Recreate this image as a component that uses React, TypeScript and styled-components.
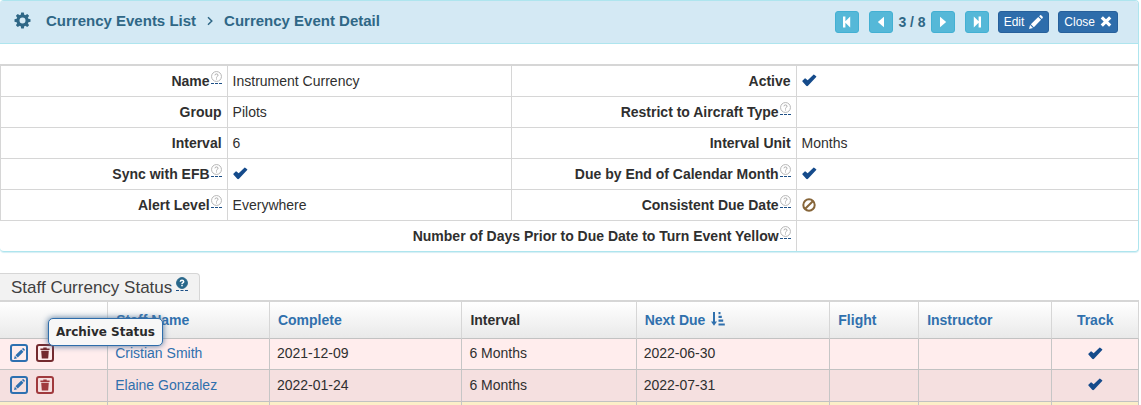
import React from "react";
import styled, { createGlobalStyle, css } from "styled-components";

const GlobalStyle = createGlobalStyle`
  *, *::before, *::after { box-sizing: border-box; }
  body {
    margin: 0;
    background: #fff;
    color: #2f2f2f;
    font: 14px/20px "Liberation Sans", Arial, sans-serif;
  }
`;

const Page = styled.main`
  padding-right: 2px;
`;

const Panel = styled.section`
  border: solid #aee5ee;
  border-width: 1px 1px 1px 0;
  border-radius: 4px;
  box-shadow: 0 1px 1px #d5eef4;
`;

const PanelHeader = styled.header`
  display: flex;
  align-items: center;
  justify-content: space-between;
  min-height: 43px;
  padding: 0 20px 0 14px;
  background: #d4e9f4;
  border-bottom: 1px solid #aee5ee;
  border-radius: 3px 3px 0 0;
`;

const Crumbs = styled.nav`
  display: flex;
  align-items: center;
  gap: 11px;
  color: #2f6786;
  font-size: 15px;
  font-weight: bold;
  padding-bottom: 3px;

  a {
    color: inherit;
    text-decoration: none;
  }
  & > svg:first-child {
    margin-right: 4px;
  }
`;

const Toolbar = styled.div`
  display: flex;
  align-items: center;
  gap: 9px;
`;

const Pager = styled.div`
  display: flex;
  align-items: center;
  gap: 10px;
`;

const Count = styled.span`
  margin: 0 -5px;
  padding-bottom: 1px;
  color: #2f6786;
  font-weight: bold;
`;

const Button = styled.button<{ $primary?: boolean }>`
  display: inline-flex;
  align-items: center;
  justify-content: center;
  gap: 5px;
  min-width: 24px;
  height: 22px;
  padding: 0 5px 1px;
  border: 1px solid ${(p) => (p.$primary ? "#27609b" : "#43b0d3")};
  border-radius: 3px;
  background: ${(p) => (p.$primary ? "#2e6dab" : "#55b8d8")};
  color: #fff;
  font: 12px/18px "Liberation Sans", Arial, sans-serif;
  cursor: pointer;
`;

const DetailTable = styled.table`
  width: 100%;
  margin-top: 20px;
  border-spacing: 0;
  border-top: 2px solid #d6d6d6;
  table-layout: fixed;

  th, td {
    height: 31px;
    padding: 4px 5px 5px;
    border-right: 1px solid #d6d6d6;
    border-bottom: 1px solid #d6d6d6;
  }
  th { text-align: right; }
  th:first-child:not([colspan]) { border-left: 1px solid #d6d6d6; }
  td { text-align: left; }
  td:last-child { border-right: 0; }
  tr:last-child > * {
    height: 30px;
    border-bottom: 0;
  }
  td > svg { display: block; }
`;

const HelpMark = styled.abbr<{ $solid?: boolean }>`
  display: inline-block;
  margin-left: ${(p) => (p.$solid ? 4 : 1)}px;
  padding-bottom: 1px;
  border-bottom: 1px dashed #1d4f86;
  vertical-align: 2px;
  line-height: 0;
  text-decoration: none;
  cursor: help;

  svg { display: block; }
`;

const TabBar = styled.div`
  display: flex;
  margin-top: 21px;
`;

const Tab = styled.h2`
  height: 27px;
  margin: 0;
  padding: 3px 11px 3px 11px;
  border: 1px solid #d6d6d6;
  border-width: 1px 1px 0 0;
  border-radius: 0 4px 0 0;
  background: #f2f2f2;
  color: #404040;
  font-size: 17px;
  font-weight: normal;
  line-height: 20px;
`;

const StaffTable = styled.table`
  width: 100%;
  border-spacing: 0;
  border-top: 2px solid #d6d6d6;
  table-layout: fixed;

  th, td {
    border-right: 1px solid #c6c6c6;
    border-bottom: 1px solid #c2c2c2;
    text-align: left;
  }
  th {
    height: 37px;
    padding: 0 8px;
    border-right-color: #d6d6d6;
    background: linear-gradient(#fff, #e9e9e9);
  }
  a {
    color: #3070ad;
    text-decoration: none;
  }
  th:last-child, td:last-child { text-align: center; }
  td:last-child svg { display: block; margin: 0 auto; }
`;

const tones = { light: "#ffeded", dark: "#f5e0e0", due: "#fcefc8" };

const StaffRow = styled.tr<{ $tone: keyof typeof tones }>`
  td {
    height: 31px;
    padding: 0 7px 2px;
    background: ${(p) => tones[p.$tone]};
    ${(p) => p.$tone === "dark" && css`height: 32px;`}
    ${(p) => p.$tone === "due" && css`height: 3px; border-bottom: 0;`}
  }
`;

const Actions = styled.div`
  display: flex;
  gap: 8px;
  padding-left: 3px;
`;

const ActionSlot = styled.div`
  position: relative;
  display: flex;
`;

const actionColors = { edit: "#2e70b0", archive: "#a03a3d", hover: "#742a2e" };

const ActionButton = styled.button<{ $kind: keyof typeof actionColors }>`
  display: flex;
  align-items: center;
  justify-content: center;
  width: 18px;
  height: 18px;
  padding: 0;
  border: 2px solid ${(p) => actionColors[p.$kind]};
  border-radius: 3px;
  background: transparent;
  color: ${(p) => actionColors[p.$kind]};
  cursor: pointer;
`;

const Tooltip = styled.span`
  position: absolute;
  left: 12px;
  bottom: 16px;
  padding: 4px 7px;
  border: 1px solid #2e6dab;
  border-radius: 5px;
  background: #f7f7f7;
  box-shadow: 0 0 6px #4d7299;
  color: #2b2b2b;
  font: bold 12px/18px "DejaVu Sans", Verdana, sans-serif;
  white-space: nowrap;
`;

const SortLink = styled.a`
  display: inline-flex;
  align-items: center;
  gap: 6px;

  svg { margin-bottom: 3px; }
`;

function Gear() {
  return (
    <svg width="17" height="17" viewBox="-8.5 -8.5 17 17" aria-hidden="true">
      <circle r="4.5" fill="none" stroke="currentColor" strokeWidth="3" />
      {[0, 45, 90, 135, 180, 225, 270, 315].map((a) => (
        <path key={a} d="M-1.9-5.2L-1.3-8H1.3L1.9-5.2z" fill="currentColor" transform={`rotate(${a})`} />
      ))}
    </svg>
  );
}

function Check() {
  return (
    <svg width="15" height="13" viewBox="0 0 15 13" role="img" aria-label="Yes">
      <path d="M.4 6.8L2.7 4.4Q3.1 4.1 3.5 4.4L5.7 6.2L11.4.7Q11.8.4 12.2.7L14.2 2.2Q14.5 2.6 14.2 3L6 11.8Q5 12.6 4.2 11.7L.4 7.4Q.2 7.1.4 6.8z" fill="#154b8b" />
    </svg>
  );
}

function Ban() {
  return (
    <svg width="14" height="14" viewBox="0 0 14 14" role="img" aria-label="No" fill="none" stroke="#87663a" strokeWidth="2">
      <circle cx="7" cy="7" r="5.7" />
      <path d="M3.2 10.8L10.8 3.2" />
    </svg>
  );
}

function Pencil({ size = 14 }: { size?: number }) {
  return (
    <svg width={size} height={size} viewBox="0 0 13 13" fill="currentColor" aria-hidden="true">
      <path d="M0 13L1 9.3L3.7 12zM1.7 8.5L8.6 1.8L11.2 4.4L4.5 11.3zM9.4 1.1L10.3.3Q10.8-.1 11.3.3L12.7 1.7Q13.1 2.2 12.7 2.7L11.9 3.6z" />
    </svg>
  );
}

function Cross() {
  return (
    <svg width="12" height="11" viewBox="0 0 12 11" stroke="currentColor" strokeWidth="3.2" aria-hidden="true">
      <path d="M1.8 1.3L10.2 9.7M10.2 1.3L1.8 9.7" />
    </svg>
  );
}

function Trash() {
  return (
    <svg width="10" height="12" viewBox="0 0 10 12" fill="currentColor" aria-hidden="true">
      <path d="M3.3 1.4V.4H6.7V1.4H9.6V3H.4V1.4zM1.2 3.7H8.8L8.2 11.6H1.8z" />
    </svg>
  );
}

const navPaths = {
  First: "M1 .5H3.4V5.2L8.2.5V11.5L3.4 6.8V11.5H1z",
  Previous: "M8 .8V11.2L1.8 6z",
  Next: "M2 .8V11.2L8.2 6z",
  Last: "M9 .5H6.6V5.2L1.8.5V11.5L6.6 6.8V11.5H9z",
};

function NavButton({ kind }: { kind: keyof typeof navPaths }) {
  return (
    <Button type="button" aria-label={kind}>
      <svg width="10" height="12" viewBox="0 0 10 12" fill="currentColor" aria-hidden="true">
        <path d={navPaths[kind]} />
      </svg>
    </Button>
  );
}

function Help({ solid }: { solid?: boolean }) {
  const size = solid ? 12 : 11;
  return (
    <HelpMark $solid={solid} aria-label="Help">
      <svg width={size} height={size} viewBox="0 0 12 12" fill="none" aria-hidden="true">
        <circle cx="6" cy="6" r="5.4" fill={solid ? "#28678a" : "#fff"} stroke={solid ? "#28678a" : "#b0b0b0"} />
        <path
          d="M4.3 4.7Q4.4 3.2 6 3.2T7.7 4.6Q7.7 5.5 6.8 5.9Q6 6.3 6 7.2M6 8.1V9.3"
          stroke={solid ? "#fff" : "#a3a3a3"}
          strokeWidth={solid ? 1.5 : 1}
        />
      </svg>
    </HelpMark>
  );
}

function SortIcon() {
  return (
    <svg width="14" height="14" viewBox="0 0 14 14" fill="currentColor" aria-hidden="true">
      <path d="M2 0H4V9.5H6L3 13.8L0 9.5H2zM7.5 0H9.5V2.2H7.5zM7.5 3.8H10.8V6H7.5zM7.5 7.6H12.2V9.8H7.5zM7.5 11.4H13.8V13.6H7.5z" />
    </svg>
  );
}

type Field = { label: string; help?: boolean; value?: React.ReactNode };

const fields: [Field, Field][] = [
  [{ label: "Name", help: true, value: "Instrument Currency" }, { label: "Active", value: <Check /> }],
  [{ label: "Group", value: "Pilots" }, { label: "Restrict to Aircraft Type", help: true }],
  [{ label: "Interval", value: "6" }, { label: "Interval Unit", value: "Months" }],
  [{ label: "Sync with EFB", help: true, value: <Check /> }, { label: "Due by End of Calendar Month", help: true, value: <Check /> }],
  [{ label: "Alert Level", help: true, value: "Everywhere" }, { label: "Consistent Due Date", help: true, value: <Ban /> }],
];

const staff = [
  { name: "Cristian Smith", complete: "2021-12-09", due: "2022-06-30", tone: "light" as const, hovered: true },
  { name: "Elaine Gonzalez", complete: "2022-01-24", due: "2022-07-31", tone: "dark" as const, hovered: false },
];

const columnWidths = [9.5, 14.2, 16.9, 15.3, 17, 7.8, 11.7, 7.6];

function FieldCells({ field }: { field: Field }) {
  return (
    <>
      <th scope="row">
        {field.label}
        {field.help && <Help />}
      </th>
      <td>{field.value}</td>
    </>
  );
}

export default function App() {
  return (
    <Page>
      <GlobalStyle />
      <Panel>
        <PanelHeader>
          <Crumbs aria-label="Breadcrumb">
            <Gear />
            <a href="#list">Currency Events List</a>
            <svg width="6" height="10" viewBox="0 0 6 10" fill="none" stroke="currentColor" strokeWidth="1.5" aria-hidden="true">
              <path d="M1 1.2L4.8 5L1 8.8" />
            </svg>
            <span>Currency Event Detail</span>
          </Crumbs>
          <Toolbar>
            <Pager>
              <NavButton kind="First" />
              <NavButton kind="Previous" />
              <Count>3 / 8</Count>
              <NavButton kind="Next" />
              <NavButton kind="Last" />
            </Pager>
            <Button type="button" $primary>
              Edit <Pencil />
            </Button>
            <Button type="button" $primary>
              Close <Cross />
            </Button>
          </Toolbar>
        </PanelHeader>
        <DetailTable>
          <colgroup>
            <col style={{ width: "20%" }} />
            <col style={{ width: "25%" }} />
            <col style={{ width: "25%" }} />
            <col style={{ width: "30%" }} />
          </colgroup>
          <tbody>
            {fields.map(([left, right]) => (
              <tr key={left.label}>
                <FieldCells field={left} />
                <FieldCells field={right} />
              </tr>
            ))}
            <tr>
              <th scope="row" colSpan={3}>
                Number of Days Prior to Due Date to Turn Event Yellow
                <Help />
              </th>
              <td />
            </tr>
          </tbody>
        </DetailTable>
      </Panel>

      <TabBar>
        <Tab>
          Staff Currency Status
          <Help solid />
        </Tab>
      </TabBar>
      <StaffTable>
        <colgroup>
          {columnWidths.map((w, i) => (
            <col key={i} style={{ width: `${w}%` }} />
          ))}
        </colgroup>
        <thead>
          <tr>
            <th aria-label="Actions" />
            <th><a href="#name">Staff Name</a></th>
            <th><a href="#complete">Complete</a></th>
            <th>Interval</th>
            <th><SortLink href="#due">Next Due <SortIcon /></SortLink></th>
            <th><a href="#flight">Flight</a></th>
            <th><a href="#instructor">Instructor</a></th>
            <th><a href="#track">Track</a></th>
          </tr>
        </thead>
        <tbody>
          {staff.map((s) => (
            <StaffRow key={s.name} $tone={s.tone}>
              <td>
                <Actions>
                  <ActionButton type="button" $kind="edit" aria-label={`Edit ${s.name}`}>
                    <Pencil size={11} />
                  </ActionButton>
                  <ActionSlot>
                    <ActionButton type="button" $kind={s.hovered ? "hover" : "archive"} aria-label={`Archive ${s.name}`}>
                      <Trash />
                    </ActionButton>
                    {s.hovered && <Tooltip role="tooltip">Archive Status</Tooltip>}
                  </ActionSlot>
                </Actions>
              </td>
              <td><a href="#staff">{s.name}</a></td>
              <td>{s.complete}</td>
              <td>6 Months</td>
              <td>{s.due}</td>
              <td />
              <td />
              <td><Check /></td>
            </StaffRow>
          ))}
          <StaffRow $tone="due">
            {columnWidths.map((_, i) => (
              <td key={i} />
            ))}
          </StaffRow>
        </tbody>
      </StaffTable>
    </Page>
  );
}
